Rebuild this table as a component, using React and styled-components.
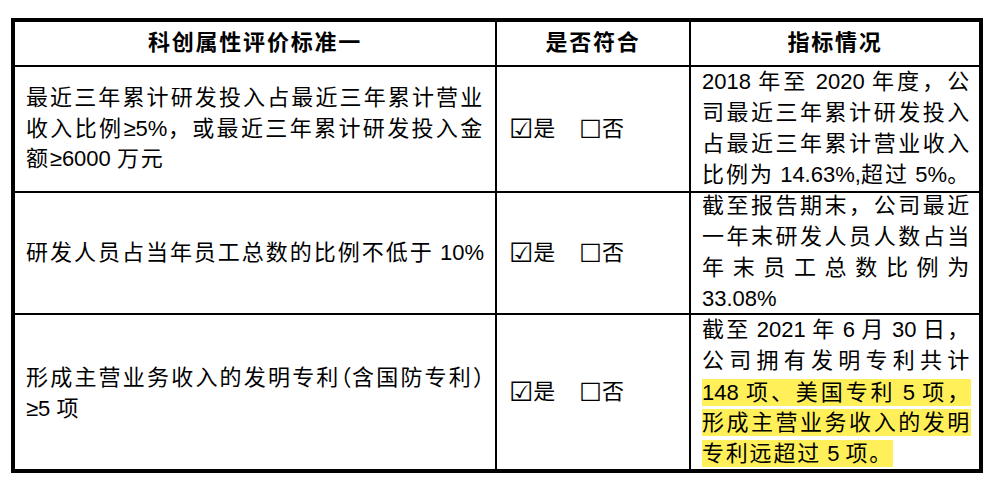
import styled, { createGlobalStyle } from "styled-components";

const GlobalStyle = createGlobalStyle`
  html, body {
    margin: 0;
    padding: 0;
    background: #ffffff;
  }
  body {
    font-family: "Liberation Sans", "Noto Sans CJK SC", sans-serif;
    color: #000;
  }
`;

const App = () => {
  return (
    <Page>
      <GlobalStyle />
      <Frame>
        <Cell $head>科创属性评价标准一</Cell>
        <Cell $head>是否符合</Cell>
        <Cell $head $lastCol>指标情况</Cell>

        <Cell $pad="0 11px">
          <Line $justify>最近三年累计研发投入占最近三年累计营业</Line>
          <Line $justify>
            收入比例<Num>≥5%</Num>，或最近三年累计研发投入金
          </Line>
          <Line>
            额<Num>≥6000 </Num>万元
          </Line>
        </Cell>
        <Cell>
          <Choices />
        </Cell>
        <Cell $lastCol $pad="0 8px 0 11px">
          <Line $justify>
            <Num>2018 </Num>年至<Num> 2020 </Num>年度，公
          </Line>
          <Line $justify>司最近三年累计研发投入</Line>
          <Line $justify>占最近三年累计营业收入</Line>
          <Line $justify>
            比例为<Num> 14.63%,</Num>超过<Num> 5%</Num>。
          </Line>
        </Cell>

        <Cell $pad="0 11px">
          <Line $justify>
            研发人员占当年员工总数的比例不低于<Num> 10%</Num>
          </Line>
        </Cell>
        <Cell>
          <Choices />
        </Cell>
        <Cell $lastCol $pad="0 8px 0 11px">
          <Line $justify>截至报告期末，公司最近</Line>
          <Line $justify>一年末研发人员人数占当</Line>
          <Line $justify>年末员工总数比例为</Line>
          <Line>
            <Num>33.08%</Num>
          </Line>
        </Cell>

        <Cell $pad="0 11px" $lastRow>
          <Line $justify>
            形成主营业务收入的发明专利<Punct>（</Punct>含国防专利<Punct>）</Punct>
          </Line>
          <Line>
            <Num>≥5 </Num>项
          </Line>
        </Cell>
        <Cell $lastRow>
          <Choices />
        </Cell>
        <Cell $lastCol $lastRow $pad="0 8px 0 11px">
          <Line $justify>
            截至<Num> 2021 </Num>年<Num> 6 </Num>月<Num> 30 </Num>日，
          </Line>
          <Line $justify>公司拥有发明专利共计</Line>
          <Line $justify $mark>
            <Num>148 </Num>项、美国专利<Num> 5 </Num>项，
          </Line>
          <Line $justify $mark>形成主营业务收入的发明</Line>
          <Line $mark>
            专利远超过<Num> 5 </Num>项。
          </Line>
        </Cell>
      </Frame>
    </Page>
  );
};

const Choices = () => (
  <ChoiceRow>
    <Option>
      <Box>☑</Box>是
    </Option>
    <Option>
      <Box $size={24} $lift={2}>□</Box>否
    </Option>
  </ChoiceRow>
);

export default App;

const Page = styled.div`
  padding: 18px 0 0 11px;
`;

const Frame = styled.div`
  display: grid;
  grid-template-columns: 482px 194px 288px;
  grid-template-rows: 45px 126px 122px 154px;
  width: 964px;
  border: 4px solid #000;
`;

const Cell = styled.div`
  display: flex;
  flex-direction: column;
  justify-content: center;
  align-items: ${(p) => (p.$head ? "center" : "stretch")};
  padding: ${(p) => p.$pad || "0 11px"};
  border-right: ${(p) => (p.$lastCol ? "none" : "2px solid #000")};
  border-bottom: ${(p) => (p.$lastRow ? "none" : "2px solid #000")};
  font-size: 22px;
  font-weight: ${(p) => (p.$head ? 700 : 400)};
  letter-spacing: 1.8px;
  line-height: 30.8px;
  min-width: 0;
`;

const Line = styled.div`
  display: block;
  width: ${(p) => (p.$mark && !p.$justify ? "fit-content" : "auto")};
  text-align: ${(p) => (p.$justify ? "justify" : "left")};
  text-align-last: ${(p) => (p.$justify ? "justify" : "left")};
  background: ${(p) => (p.$mark ? "#fff05a" : "transparent")};
  line-height: ${(p) => (p.$mark ? "27px" : "30.8px")};
  margin: ${(p) => (p.$mark ? "1.9px 0" : "0")};
`;

const Num = styled.span`
  font-family: "Liberation Sans", sans-serif;
  font-size: 22px;
  letter-spacing: 0;
`;

const Punct = styled.span`
  font-family: "Noto Sans CJK SC", sans-serif;
  font-feature-settings: "halt";
  letter-spacing: 0;
`;

const ChoiceRow = styled.div`
  display: flex;
  align-items: center;
  gap: 24px;
  padding-left: 1px;
`;

const Option = styled.span`
  display: inline-flex;
  align-items: center;
  letter-spacing: 0;
  white-space: nowrap;
`;

const Box = styled.span`
  font-family: "DejaVu Sans", sans-serif;
  font-size: ${(p) => p.$size || 27}px;
  line-height: 1;
  transform: translateY(${(p) => -(p.$lift || 0)}px);
`;
